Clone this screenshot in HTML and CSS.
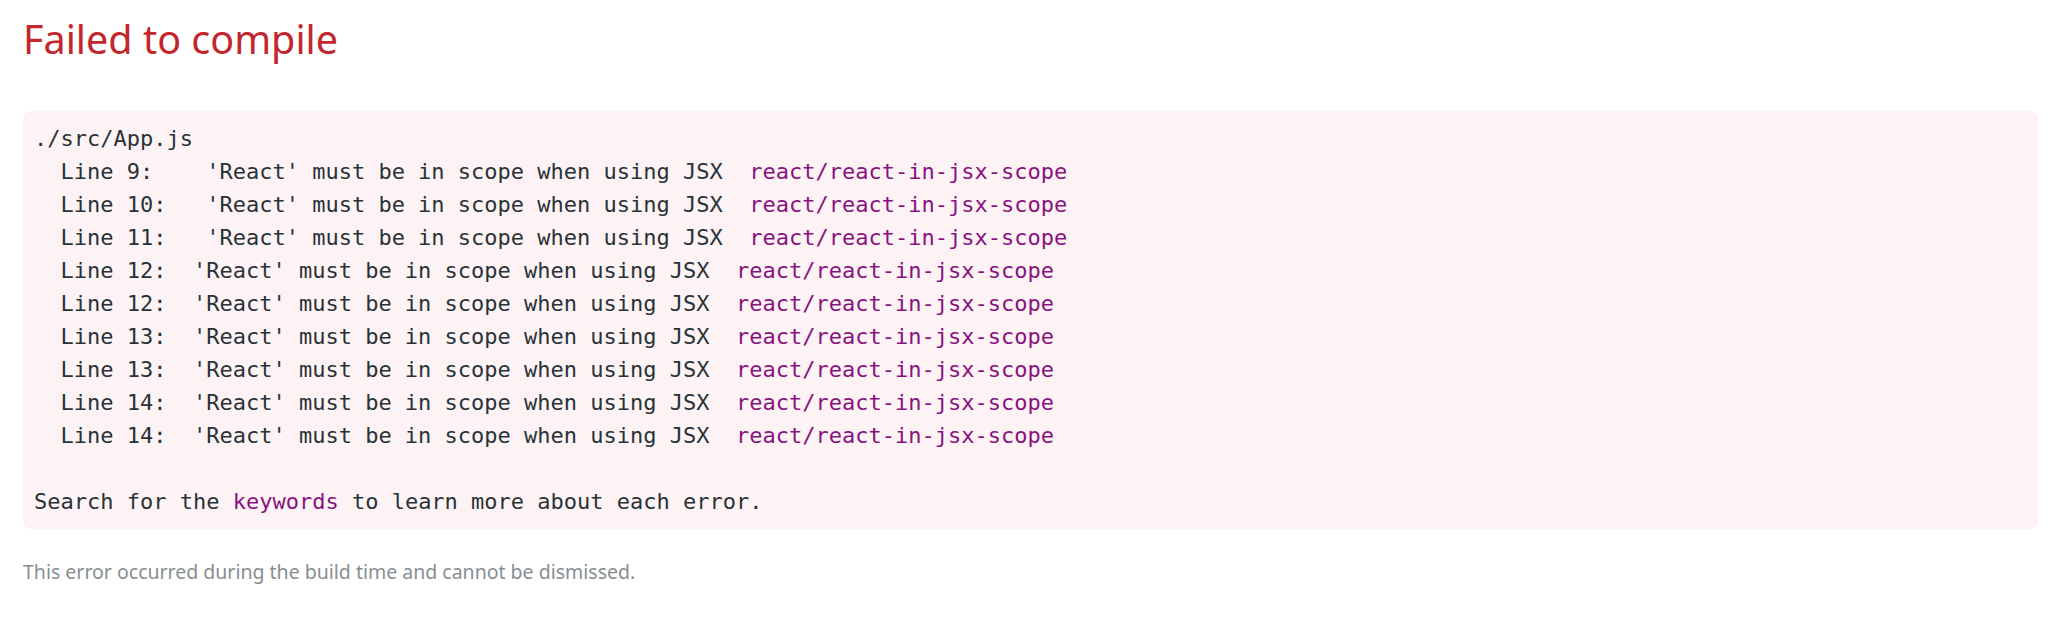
FILE: index.html
```html
<!DOCTYPE html>
<html lang="en">
<head>
    <meta charset="UTF-8">
    <meta name="viewport" content="width=device-width, initial-scale=1.0">
    <title>Failed to compile</title>
    <link rel="stylesheet" href="styles.css">
</head>
<body>

<div class="overlay">
    <div class="header">Failed to compile</div>

    <pre class="error-box">./src/App.js
  Line 9:    'React' must be in scope when using JSX  <span class="rule">react/react-in-jsx-scope</span>
  Line 10:   'React' must be in scope when using JSX  <span class="rule">react/react-in-jsx-scope</span>
  Line 11:   'React' must be in scope when using JSX  <span class="rule">react/react-in-jsx-scope</span>
  Line 12:  'React' must be in scope when using JSX  <span class="rule">react/react-in-jsx-scope</span>
  Line 12:  'React' must be in scope when using JSX  <span class="rule">react/react-in-jsx-scope</span>
  Line 13:  'React' must be in scope when using JSX  <span class="rule">react/react-in-jsx-scope</span>
  Line 13:  'React' must be in scope when using JSX  <span class="rule">react/react-in-jsx-scope</span>
  Line 14:  'React' must be in scope when using JSX  <span class="rule">react/react-in-jsx-scope</span>
  Line 14:  'React' must be in scope when using JSX  <span class="rule">react/react-in-jsx-scope</span>

Search for the <span class="rule">keywords</span> to learn more about each error.</pre>

    <div class="footer">This error occurred during the build time and cannot be dismissed.</div>
</div>

</body>
</html>
```

FILE: styles.css
```css
/* Overlay colours */
:root {
    --black: #293238;
    --dark-gray: #878e91;
    --red: #c1272d;
    --red-transparent: rgba(206, 17, 38, 0.05);
    --purple: #881280;
}

body {
    margin: 0;
    padding: 0;
    background-color: #ffffff;
    color: var(--black);
}

.overlay {
    padding: 15px 18px 20px 23px;
}

.header {
    font-family: "Noto Sans", "Open Sans", sans-serif;
    font-size: 39.5px;
    line-height: 48px;
    color: var(--red);
    margin: 0 0 48px 0;
}

.error-box {
    font-family: "DejaVu Sans Mono", monospace;
    font-size: 22px;
    line-height: 33px;
    color: var(--black);
    background-color: var(--red-transparent);
    border-radius: 8px;
    padding: 11px;
    margin: 0;
    white-space: pre-wrap;
}

.rule {
    color: var(--purple);
}

.footer {
    font-family: "Noto Sans", "Open Sans", sans-serif;
    font-size: 19.5px;
    line-height: 26px;
    color: var(--dark-gray);
    margin-top: 30px;
}
```
